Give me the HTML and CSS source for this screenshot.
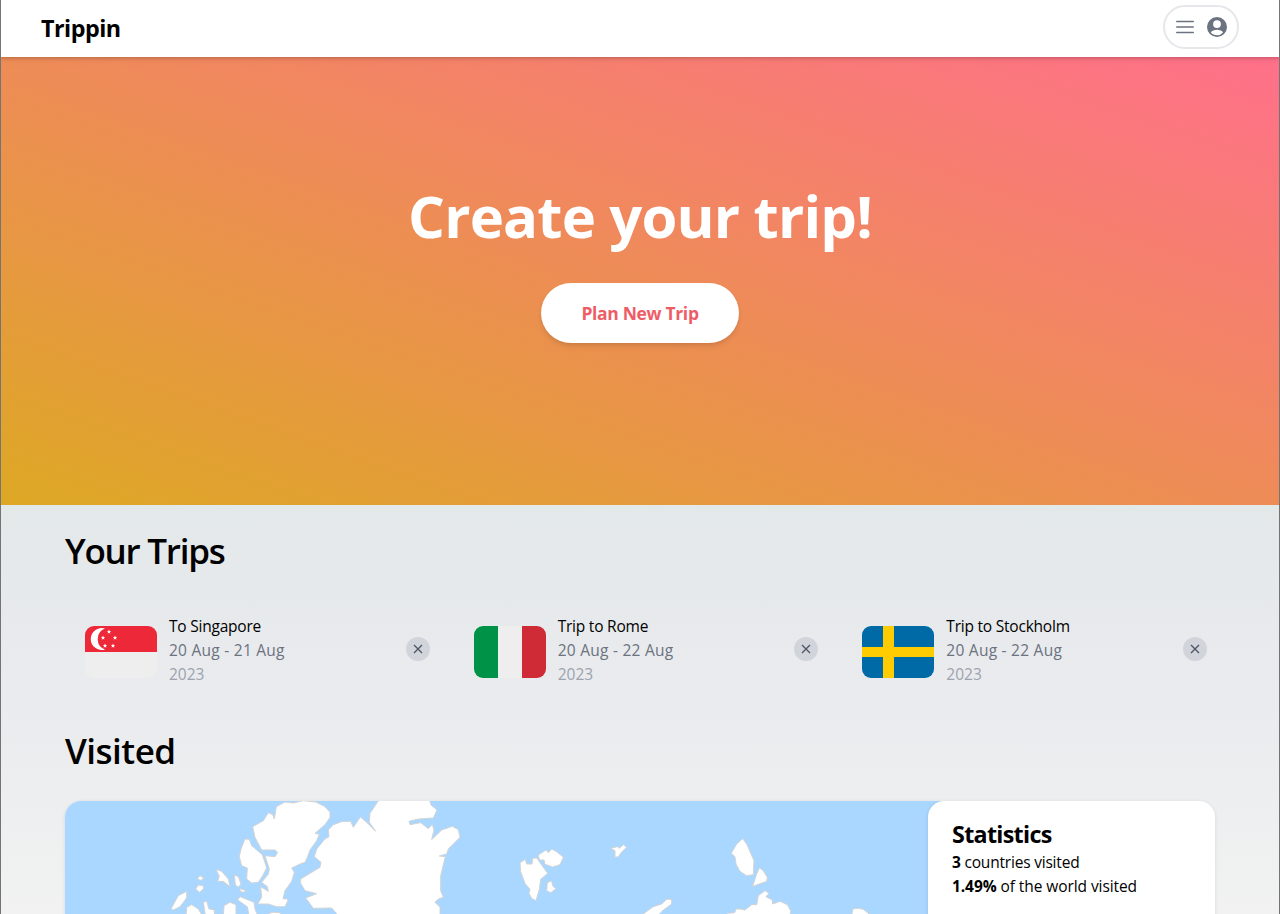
FILE: index.html
```html
<!DOCTYPE html>
<html lang="en">
<head>
<meta charset="utf-8">
<title>Trippin</title>
<link rel="stylesheet" href="styles.css">
</head>
<body>
<div class="page">
  <header class="nav">
    <a class="brand">Trippin</a>
    <button class="menu" aria-label="Account menu">
      <svg class="icon" viewBox="0 0 24 24" fill="none" stroke="currentColor" stroke-width="1.5" stroke-linecap="round"><path d="M3.75 6.5h16.5M3.75 12h16.5M3.75 17.5h16.5"/></svg>
      <svg class="icon" viewBox="0 0 24 24" fill="currentColor"><path fill-rule="evenodd" d="M12 2a10 10 0 1 0 0 20 10 10 0 0 0 0-20zm0 3.2a3.9 3.9 0 1 1 0 7.8 3.9 3.9 0 0 1 0-7.8zm0 15c-2.500 0-4.700-1-6.100-2.700.6-1.700 3.800-2.700 6.100-2.700s5.500 1 6.100 2.700A7.900 7.900 0 0 1 12 20.200z"/></svg>
    </button>
  </header>
  <section class="hero">
    <h1 class="hero-title">Create your trip!</h1>
    <button class="cta">Plan New Trip</button>
  </section>
  <main class="content">
    <h2 class="heading heading-trips">Your Trips</h2>
    <div class="trips">
      <article class="trip">
        <svg class="flag" viewBox="0 0 72 52"><path fill="#eee" d="M0 0h72v52H0z"/><path fill="#ed2939" d="M0 0h72v26H0z"/><path fill="#fff" d="M20 2.500A11 11 0 1 0 20 23.500 11.200 11.200 0 0 1 20 2.500z"/><g fill="#fff"><path id="star" d="M24 3.600l.6 1.500h1.600l-1.300 1 .5 1.600-1.400-1-1.400 1 .5-1.600-1.300-1h1.600z"/><use href="#star" x="-6" y="6"/><use href="#star" x="6" y="6"/><use href="#star" x="-4" y="14"/><use href="#star" x="4" y="14"/></g></svg>
        <div class="details"><p class="name">To Singapore</p><p class="dates">20 Aug - 21 Aug</p><p class="year">2023</p></div>
        <button class="close" aria-label="Remove"><svg viewBox="0 0 24 24"><path d="M8 8l8 8M16 8l-8 8"/></svg></button>
      </article>
      <article class="trip">
        <svg class="flag" viewBox="0 0 72 52"><path fill="#eee" d="M0 0h72v52H0z"/><path fill="#009246" d="M0 0h24v52H0z"/><path fill="#ce2b37" d="M48 0h24v52H48z"/></svg>
        <div class="details"><p class="name">Trip to Rome</p><p class="dates">20 Aug - 22 Aug</p><p class="year">2023</p></div>
        <button class="close" aria-label="Remove"><svg viewBox="0 0 24 24"><path d="M8 8l8 8M16 8l-8 8"/></svg></button>
      </article>
      <article class="trip">
        <svg class="flag" viewBox="0 0 72 52"><path fill="#006aa7" d="M0 0h72v52H0z"/><path fill="#fecc00" d="M21 0h11v52H21zM0 21h72v10H0z"/></svg>
        <div class="details"><p class="name">Trip to Stockholm</p><p class="dates">20 Aug - 22 Aug</p><p class="year">2023</p></div>
        <button class="close" aria-label="Remove"><svg viewBox="0 0 24 24"><path d="M8 8l8 8M16 8l-8 8"/></svg></button>
      </article>
    </div>
    <h2 class="heading heading-visited">Visited</h2>
    <section class="visited">
      <svg class="map" viewBox="65 801 863 299" fill="#fff" stroke="#d3d3d3" stroke-linejoin="round">
        <g transform="translate(160 794) scale(.33333)" stroke-width="3">
          <path d="M349 38L375 24 400 27 430 20 468 24 495 38 510 55 510 70 495 92 465 118 478 121 470 140 450 168 440 195 435 205 420 210 395 222 403 235 395 262 375 290 369 314 385 316 375 338 350 338 325 330 293 330 305 310 302 278 325 292 322 278 305 265 325 240 328 225 315 185 345 188 353 175 345 168 305 168 285 130 278 98 310 80 325 56 338 62 343 75z"/>
          <path d="M255 135L268 136 275 155 307 182 320 222 308 245 295 265 275 267 260 255 262 222 245 215 238 188 243 165z"/>
          <path d="M168 226L185 232 205 255 210 278 190 262 173 262 178 247zM223 243L235 248 243 270 235 280 226 272zM240 284L258 290 250 295 240 291zM112 255L120 245 132 253 122 259zM107 285L115 273 130 275 130 285 118 295z"/>
          <path d="M33 345L55 305 80 292 80 312 60 338 40 348zM78 370L80 340 95 332 115 345 130 370zM130 324L140 322 147 345 162 347 165 370 137 370zM190 370L192 335 210 325 228 332 228 370zM233 318L240 308 265 318 282 325 285 345 295 370 268 370 262 338zM325 370L327 358 340 355 360 356 364 370z"/>
        </g>
        <g transform="translate(300 794) scale(.33333)" stroke-width="3">
          <path d="M85 108L100 92 125 83 152 82 160 100 181 69 200 85 227 112 208 85 210 58 232 25 240 16 388 16 393 33 411 48 400 72 355 75 327 82 330 92 362 86 385 104 397 91 402 108 395 137 425 108 457 97 475 107 480 130 445 165 440 180 418 186 436 188 422 245 422 290 430 310 415 315 405 325 420 340 420 370 120 370 95 342 40 343 17 312 50 299 15 290 2 268 2 255 60 220 63 205 43 188 50 165 75 135 87 128z"/>
        </g>
        <g transform="translate(500 830) scale(.33333)" stroke-width="3">
          <path d="M60 98L76 88 80 102 96 102 98 85 110 84 143 130 122 148 118 178 108 212 95 205 87 190 90 178 75 160 62 125z"/>
          <path d="M115 75L138 60 145 68 155 57 170 65 190 82 180 104 158 111 135 103 132 90 118 90zM142 158L155 152 158 168 168 176 152 188 140 182zM332 55L352 50 358 55 370 44 380 52 365 66 355 80 345 82 345 62zM410 266L460 230 485 222 500 208 515 208 515 222 490 240 465 266z"/>
        </g>
        <g transform="translate(700 794) scale(.33333)" stroke-width="3">
          <path d="M128 134L140 150 162 200 160 242 140 245 120 232 108 210 105 188 94 178 110 150zM178 222L188 228 202 250 200 262 158 277 170 240z"/>
          <path d="M60 370L85 358 104 356 108 345 120 345 135 348 155 332 170 332 175 305 195 290 207 298 198 308 217 318 218 330 240 322 262 332 272 350 270 370zM455 370L458 345 475 343 490 346 520 370z"/>
        </g>
      </svg>
      <aside class="stats">
        <h3 class="stats-title">Statistics</h3>
        <p class="stat"><b>3</b> countries visited</p>
        <p class="stat stat-world"><b>1.49%</b> of the world visited</p>
      </aside>
    </section>
  </main>
</div>
</body>
</html>
```
FILE: styles.css
```css
* { box-sizing: border-box; margin: 0; padding: 0; }
body { height: 914px; overflow: hidden; font-family: "Segoe UI", "Open Sans", "Noto Sans", sans-serif; color: #000; }
button { font: inherit; border: 0; background: none; }
svg { display: block; }
.page { height: 914px; overflow: hidden; border: solid #747474; border-width: 0 1px; background: linear-gradient(#e3e8e9 505px, #eaebee 700px, #f1f2f1 914px); }
.nav { position: relative; z-index: 1; height: 57px; padding: 0 40px; display: flex; justify-content: space-between; align-items: flex-start; background: #fff; box-shadow: 0 1px 3px rgba(0, 0, 0, .14), 0 2px 6px rgba(0, 0, 0, .1); }
.brand { font-size: 23.3px; font-weight: 700; line-height: 32px; padding-top: 12px; letter-spacing: -.5px; }
.menu { margin-top: 5px; height: 44px; padding: 8px; border: 2px solid #e5e7eb; border-radius: 22px; display: flex; gap: 8px; color: #6b7280; }
.icon { width: 24px; height: 24px; }
.hero { height: 448px; display: flex; flex-direction: column; align-items: center; background: linear-gradient(to top right, #dda824, #ff708a); }
.hero-title { margin-top: 129px; font-size: 58px; line-height: 60px; font-weight: 700; letter-spacing: -.83px; color: #fff; white-space: nowrap; }
.cta { margin-top: 37px; width: 198px; height: 60px; border-radius: 30px; background: #fff; color: #ee5d66; font-size: 17.5px; font-weight: 700; letter-spacing: -.33px; box-shadow: 0 4px 6px -1px rgba(0, 0, 0, .1), 0 2px 4px -2px rgba(0, 0, 0, .1); }
.content { padding: 26px 64px 0; }
.heading { font-size: 35px; line-height: 40px; font-weight: 600; }
.heading-trips { letter-spacing: -1.25px; }
.trips { margin-top: 23px; display: grid; grid-template-columns: repeat(3, 1fr); gap: 16px; }
.trip { height: 112px; padding: 20px 8px 20px 20px; display: flex; align-items: flex-start; }
.flag { width: 72px; height: 52px; margin-top: 12px; border-radius: 9px; overflow: hidden; }
.details { margin-left: 12px; flex: 1; font-size: 15.5px; line-height: 24px; }
.name { letter-spacing: -.22px; }
.dates { color: #6b7280; letter-spacing: .25px; }
.year { color: #9ca3af; }
.close { width: 24px; height: 24px; margin-top: 23px; border-radius: 50%; background: #d1d5db; }
.close svg { fill: none; stroke: #4b5563; stroke-width: 1.3; }
.heading-visited { margin-top: 25px; letter-spacing: -.5px; }
.visited { margin-top: 30px; height: 299px; display: flex; overflow: hidden; border-radius: 16px; background: linear-gradient(to right, #aad7ff 1000px, #fff 1000px); box-shadow: 0 1px 4px rgba(0, 0, 0, .1); }
.map { width: 863px; height: 299px; }
.stats { flex: 1; padding: 17px 24px; border-radius: 16px; background: #fff; box-shadow: 0 1px 4px rgba(0, 0, 0, .12); }
.stats-title { font-size: 23.300px; line-height: 32px; font-weight: 700; letter-spacing: -.7px; }
.stat { font-size: 15.500px; line-height: 24px; letter-spacing: -.2px; }
.stat-world { letter-spacing: -.08px; }
```
